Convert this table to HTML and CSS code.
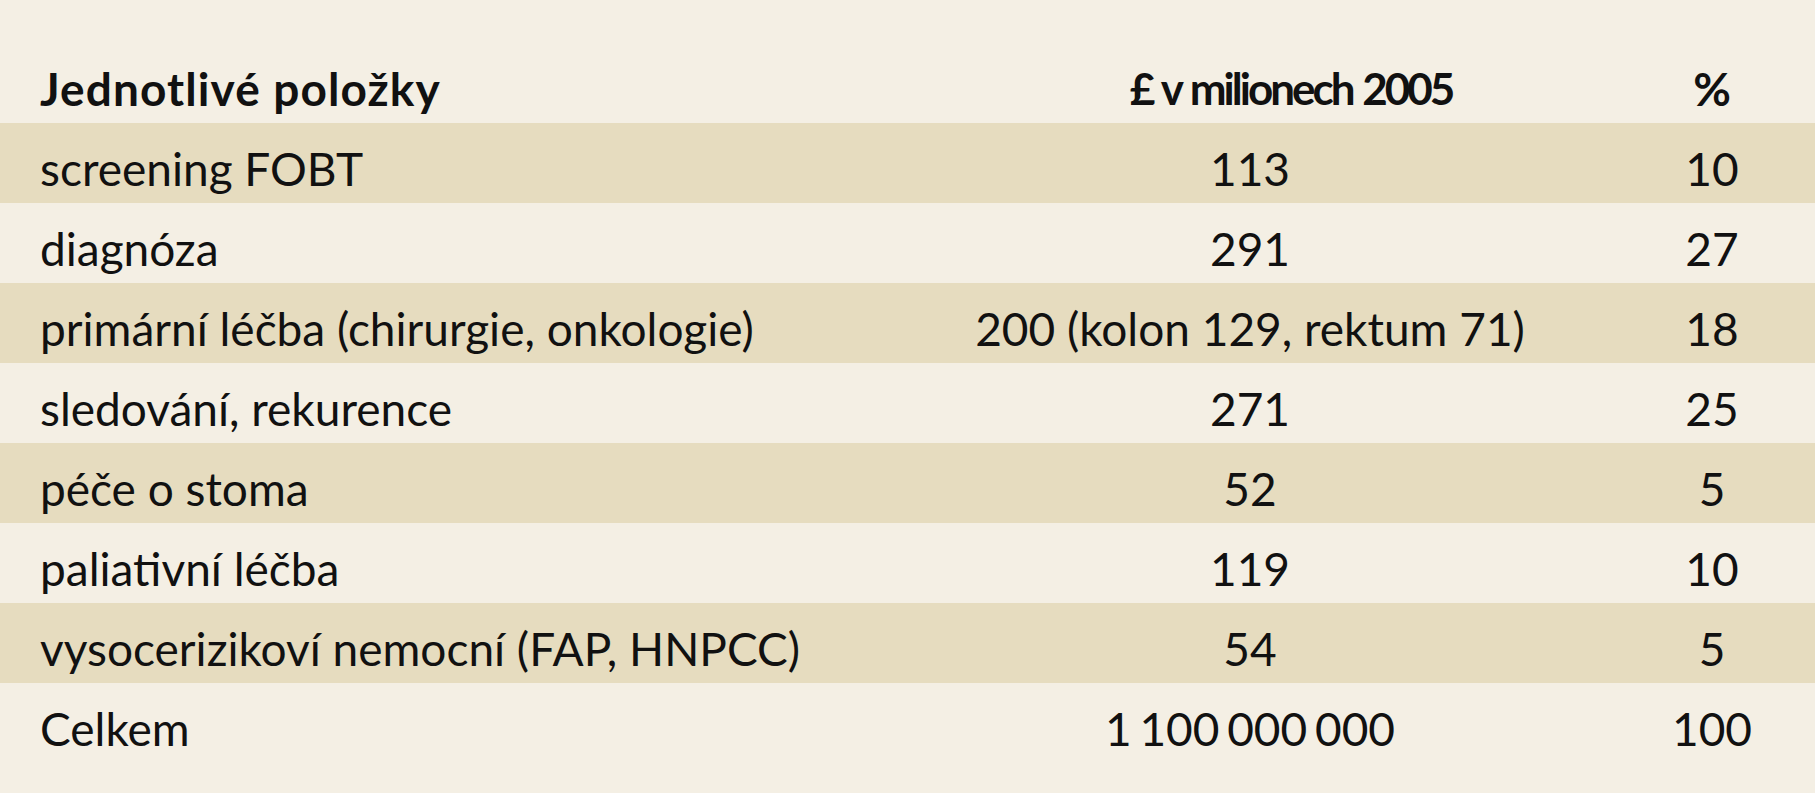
FILE: index.html
```html
<!DOCTYPE html>
<html lang="cs">
<head>
<meta charset="utf-8">
<title>Náklady</title>
<link rel="stylesheet" href="styles.css">
</head>
<body>
<div class="table">
  <div class="row head">
    <div class="c1">Jednotlivé položky</div>
    <div class="c2 c2-head">£ v milionech 2005</div>
    <div class="c3">%</div>
  </div>
  <div class="row alt">
    <div class="c1">screening FOBT</div>
    <div class="c2">113</div>
    <div class="c3">10</div>
  </div>
  <div class="row">
    <div class="c1">diagnóza</div>
    <div class="c2">291</div>
    <div class="c3">27</div>
  </div>
  <div class="row alt">
    <div class="c1">primární léčba (chirurgie, onkologie)</div>
    <div class="c2">200 (kolon 129, rektum 71)</div>
    <div class="c3">18</div>
  </div>
  <div class="row">
    <div class="c1">sledování, rekurence</div>
    <div class="c2">271</div>
    <div class="c3">25</div>
  </div>
  <div class="row alt">
    <div class="c1">péče o stoma</div>
    <div class="c2">52</div>
    <div class="c3">5</div>
  </div>
  <div class="row">
    <div class="c1">paliativní léčba</div>
    <div class="c2">119</div>
    <div class="c3">10</div>
  </div>
  <div class="row alt">
    <div class="c1">vysocerizikoví nemocní (FAP, HNPCC)</div>
    <div class="c2">54</div>
    <div class="c3">5</div>
  </div>
  <div class="row">
    <div class="c1">Celkem</div>
    <div class="c2 c2-total">1 100 000 000</div>
    <div class="c3">100</div>
  </div>
</div>
</body>
</html>
```
FILE: styles.css
```css
html, body {
  margin: 0;
  padding: 0;
  background: #ffffff;
}

.table {
  background: #f4efe4;
  height: 793px;
  box-sizing: border-box;
  padding: 43px 0 30px 0;
  font-family: Lato, "Open Sans", sans-serif;
  font-size: 46px;
  color: #111111;
}

.row {
  display: grid;
  grid-template-columns: 860px 700px 1fr;
  height: 80px;
  align-items: center;
  padding-left: 40px;
}

.row > div {
  padding-top: 10px;
  white-space: nowrap;
}

.row.alt {
  background: #e6dcbf;
}

.head {
  font-weight: 700;
}

.head .c1 {
  letter-spacing: 1.1px;
}

.c2 {
  text-align: center;
}

.c2-head {
  padding-left: 82px;
  font-size: 44px;
  letter-spacing: -3px;
  word-spacing: 2px;
}

.c2-total {
  word-spacing: -4px;
}

.c3 {
  padding-left: 9px;
  text-align: center;
}
```
